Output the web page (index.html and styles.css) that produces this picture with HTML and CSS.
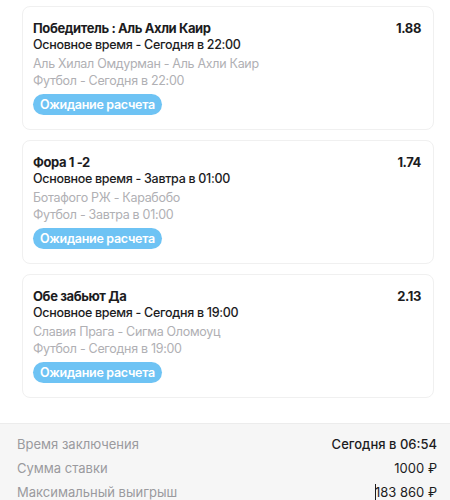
FILE: index.html
```html
<!DOCTYPE html>
<html lang="ru">
<head>
    <meta charset="UTF-8">
    <meta name="viewport" content="width=device-width, initial-scale=1.0">
    <title>Купон</title>
    <link rel="stylesheet" href="styles.css">
</head>
<body>
    <div class="bets">
        <div class="bet">
            <div class="bet-head">
                <div class="bet-name">Победитель : Аль Ахли Каир</div>
                <div class="bet-odds">1.88</div>
            </div>
            <div class="bet-period">Основное время - Сегодня в 22:00</div>
            <div class="bet-info">
                <div>Аль Хилал Омдурман - Аль Ахли Каир</div>
                <div>Футбол - Сегодня в 22:00</div>
            </div>
            <span class="status">Ожидание расчета</span>
        </div>

        <div class="bet">
            <div class="bet-head">
                <div class="bet-name">Фора 1 -2</div>
                <div class="bet-odds">1.74</div>
            </div>
            <div class="bet-period">Основное время - Завтра в 01:00</div>
            <div class="bet-info">
                <div>Ботафого РЖ - Карабобо</div>
                <div>Футбол - Завтра в 01:00</div>
            </div>
            <span class="status">Ожидание расчета</span>
        </div>

        <div class="bet">
            <div class="bet-head">
                <div class="bet-name">Обе забьют Да</div>
                <div class="bet-odds">2.13</div>
            </div>
            <div class="bet-period">Основное время - Сегодня в 19:00</div>
            <div class="bet-info">
                <div>Славия Прага - Сигма Оломоуц</div>
                <div>Футбол - Сегодня в 19:00</div>
            </div>
            <span class="status">Ожидание расчета</span>
        </div>
    </div>

    <div class="summary">
        <div class="row">
            <span class="label">Время заключения</span>
            <span class="value strong">Сегодня в 06:54</span>
        </div>
        <div class="row">
            <span class="label">Сумма ставки</span>
            <span class="value">1000 ₽</span>
        </div>
        <div class="row">
            <span class="label">Максимальный выигрыш</span>
            <span class="value"><span class="caret"></span>183 860 ₽</span>
        </div>
    </div>
</body>
</html>
```

FILE: styles.css
```css
body {
    margin: 0;
    font-family: Inter, "Noto Sans", sans-serif;
    font-size: 13px;
    color: #1c1c1e;
    background-color: #ffffff;
}

.bets {
    display: flex;
    flex-direction: column;
    gap: 10px;
    padding: 6px 16px 25px 22px;
}

.bet {
    border: 1px solid #f0f0f0;
    border-radius: 8px;
    padding: 13px 12px 14px 10px;
    font-size: 12.5px;
    letter-spacing: -0.3px;
    line-height: 17px;
}

.bet-head {
    display: flex;
    justify-content: space-between;
    align-items: baseline;
    line-height: 16px;
}

.bet-name,
.bet-odds {
    font-size: 13px;
    font-weight: 700;
    letter-spacing: -0.4px;
}

.bet-period {
    font-weight: 500;
}

.bet-info {
    color: #b0b0b4;
    margin-top: 2px;
}

.status {
    display: block;
    width: max-content;
    margin-top: 5px;
    padding: 0 7px;
    height: 21px;
    line-height: 21px;
    border-radius: 11px;
    background-color: #6ec3f4;
    color: #ffffff;
    font-weight: 600;
}

.summary {
    border-top: 1px solid #ececec;
    background-color: #f6f6f6;
    padding: 8px 13px 0 17px;
}

.row {
    display: flex;
    justify-content: space-between;
    line-height: 24px;
}

.label {
    color: #9a9a9e;
}

.value.strong {
    font-weight: 500;
}

.caret {
    display: inline-block;
    width: 1px;
    height: 16px;
    margin-right: -1px;
    vertical-align: -3px;
    background-color: #1c1c1e;
}
```
